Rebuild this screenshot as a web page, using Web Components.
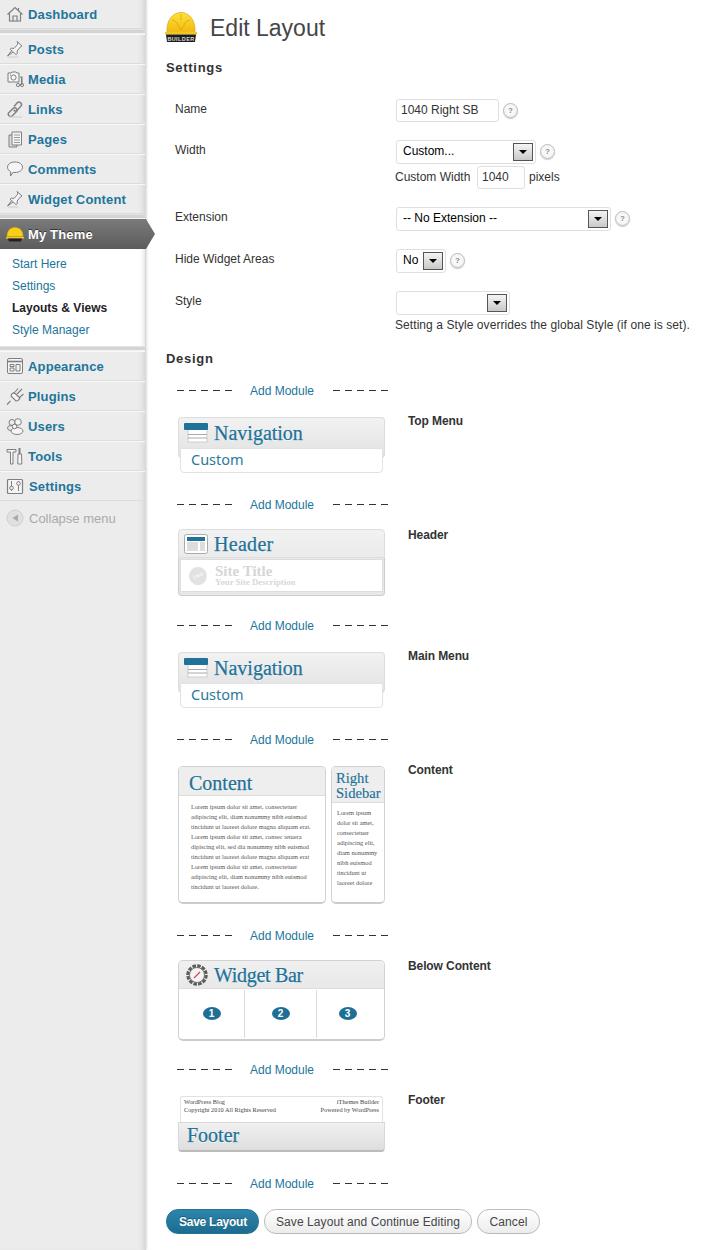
<!DOCTYPE html>
<html lang="en"><head><meta charset="utf-8"><title>Edit Layout</title>
<style>
html,body{margin:0;padding:0;background:#fff;height:1250px;overflow:hidden}
body{font:12px "Liberation Sans",Arial,sans-serif;color:#333}
</style></head><body>
<wp-app>
  <wp-sidebar slot="side">
    <wp-item icon="home" label="Dashboard"></wp-item>
    <wp-sep></wp-sep>
    <wp-item icon="pin" label="Posts"></wp-item>
    <wp-item icon="media" label="Media"></wp-item>
    <wp-item icon="link" label="Links"></wp-item>
    <wp-item icon="pages" label="Pages"></wp-item>
    <wp-item icon="comment" label="Comments"></wp-item>
    <wp-item icon="pin" label="Widget Content"></wp-item>
    <wp-sep></wp-sep>
    <wp-current label="My Theme"></wp-current>
    <wp-sub>
      <wp-sublink>Start Here</wp-sublink>
      <wp-sublink>Settings</wp-sublink>
      <wp-sublink active>Layouts &amp; Views</wp-sublink>
      <wp-sublink>Style Manager</wp-sublink>
    </wp-sub>
    <wp-sep></wp-sep>
    <wp-item icon="appearance" label="Appearance"></wp-item>
    <wp-item icon="plugin" label="Plugins"></wp-item>
    <wp-item icon="users" label="Users"></wp-item>
    <wp-item icon="tools" label="Tools"></wp-item>
    <wp-item icon="settings" label="Settings" gap="5"></wp-item>
    <wp-collapse></wp-collapse>
  </wp-sidebar>
  <wp-main>
    <page-title>Edit Layout</page-title>
    <sec-head style="margin-top:8px">Settings</sec-head>
    <form-row label="Name" style="margin-top:23px;height:41px"><text-box w="103">1040 Right SB</text-box><help-tip></help-tip></form-row>
    <form-row label="Width" style="height:67px">
      <fake-select w="140">Custom...</fake-select><help-tip></help-tip>
      <sub-line><span style="width:78px;padding-bottom:2px">Custom Width</span><text-box w="48" style="margin:0 4px">1040</text-box><span style="padding-bottom:2px">pixels</span></sub-line>
    </form-row>
    <form-row label="Extension" style="height:42px"><fake-select w="215">-- No Extension --</fake-select><help-tip></help-tip></form-row>
    <form-row label="Hide Widget Areas" style="height:42px"><fake-select w="50">No</fake-select><help-tip></help-tip></form-row>
    <form-row label="Style" style="height:59px"><fake-select w="114"></fake-select>
      <sub-line class="note">Setting a Style overrides the global Style (if one is set).</sub-line>
    </form-row>
    <sec-head style="margin-top:0">Design</sec-head>
    <add-module style="margin-top:16px"></add-module>
    <layout-row label="Top Menu" style="margin-top:20px"><nav-mod></nav-mod></layout-row>
    <add-module style="margin-top:24px"></add-module>
    <layout-row label="Header" o="-2" style="margin-top:18px"><header-mod></header-mod></layout-row>
    <add-module style="margin-top:22px"></add-module>
    <layout-row label="Main Menu" style="margin-top:20px"><nav-mod></nav-mod></layout-row>
    <add-module style="margin-top:24px"></add-module>
    <layout-row label="Content" style="margin-top:20px"><content-mod></content-mod></layout-row>
    <add-module style="margin-top:24px"></add-module>
    <layout-row label="Below Content" o="-2" style="margin-top:18px"><widget-mod></widget-mod></layout-row>
    <add-module style="margin-top:21px"></add-module>
    <layout-row label="Footer" style="margin-top:20px"><footer-mod></footer-mod></layout-row>
    <add-module style="margin-top:24px"></add-module>
    <button-row>
      <wp-button primary>Save Layout</wp-button>
      <wp-button>Save Layout and Continue Editing</wp-button>
      <wp-button style="width:63px;justify-content:center">Cancel</wp-button>
    </button-row>
  </wp-main>
</wp-app>
<script>
const SERIF='"Liberation Serif","DejaVu Serif",serif';
const G='#7f7f7f',L='#f5f5f5';
const ICONS={
home:`<path d="M1.5 9.5 9 2.5l7.5 7M3.5 8.5V16h11V8.5M7 16v-5h4v5M12.5 3v2.5" fill="none" stroke="${G}" stroke-width="1.2"/><path d="M3.5 16.5h11" stroke="#aaa"/>`,
pin:`<path d="M11 1.5l5 4.5-1.5.8-3.4 4.2.2 2.6-1.2 1-6-5.4 1.2-1 2.7.2 3.6-4 .1-1.5z" fill="${L}" stroke="${G}"/><path d="M5.8 10.5 1.5 16l5.6-4" fill="#ddd" stroke="${G}"/><path d="M2 17h10" stroke="#ccc"/>`,
media:`<path d="M2 3h3l1-1h4l1 1h2v9H2z" fill="${L}" stroke="${G}"/><circle cx="7.5" cy="7.5" r="2.6" fill="none" stroke="${G}"/><path d="M14 7h1.5v8M16 6.5v8" fill="none" stroke="${G}"/><circle cx="12" cy="15" r="1.6" fill="none" stroke="${G}"/><circle cx="16" cy="15" r="1.6" fill="none" stroke="${G}"/><path d="M4 5h1" stroke="${G}"/>`,
link:`<path d="M3 12.5 7 8.5a2.3 2.3 0 0 1 3.3 3.3l-4 4a2.3 2.3 0 0 1-3.3-3.3z" fill="none" stroke="${G}" stroke-width="1.4"/><path d="M8 6.500 11 3a2.500 2.500 0 0 1 3.800 3.400L11 10.500a2.500 2.500 0 0 1-3.400-.5" fill="none" stroke="${G}" stroke-width="1.4"/><path d="M3 17h13" stroke="#ccc"/>`,
pages:`<path d="M3 5h8v12H3z" fill="#ddd" stroke="${G}"/><path d="M6 2h9.500v13H6z" fill="${L}" stroke="${G}"/><path d="M8 5h6M8 7.500h6M8 10h6M8 12.500h6" stroke="#999"/>`,
comment:`<path d="M9 2c4.400 0 7.500 2.200 7.500 5.200S13.400 12.500 9 12.500c-.8 0-1.400 0-2-.2L4.500 16l.2-4.300C2.800 10.800 1.500 9.200 1.500 7.200 1.500 4.200 4.600 2 9 2z" fill="${L}" stroke="${G}"/>`,
appearance:`<rect x="1.500" y="1.500" width="15" height="15" rx="1.500" fill="${L}" stroke="${G}"/><path d="M2 4.500h14" stroke="${G}" stroke-width="1.600"/><path d="M4 7.500h4v2H4zM4 11h4v3H4zM10 7.500h4V14h-4z" fill="none" stroke="${G}"/>`,
plugin:`<path d="M1 17.500 4.500 14M5 9l5 5c2 0 3-1 4-3L8 5.500C6 6.500 5 7.500 5 9z" fill="${L}" stroke="${G}" stroke-width="1.100"/><path d="M9 5l3-3.500M14 10l3.500-3M11 7l5-5" stroke="${G}" stroke-width="1.100" fill="none"/>`,
users:`<circle cx="6" cy="5.500" r="3" fill="none" stroke="${G}"/><circle cx="12" cy="5" r="3.300" fill="${L}" stroke="${G}"/><ellipse cx="5" cy="11" rx="3.500" ry="2.500" fill="none" stroke="${G}"/><ellipse cx="11" cy="14" rx="6" ry="3.500" fill="${L}" stroke="${G}"/><circle cx="8.500" cy="9.500" r="2.300" fill="${L}" stroke="${G}"/>`,
tools:`<path d="M1 2.500h9V5H7v12H4.500V5H1z" fill="${L}" stroke="${G}"/><path d="M13.500 1v6" stroke="${G}" stroke-width="2"/><path d="M12 7h3.500l.3 10h-4z" fill="${L}" stroke="${G}"/>`,
settings:`<rect x="1.500" y="2.500" width="15" height="14" rx="1" fill="${L}" stroke="${G}" stroke-width="1.200"/><path d="M5.500 4v10M12.500 4v10" stroke="${G}"/><circle cx="5.500" cy="11" r="1.800" fill="${L}" stroke="${G}"/><circle cx="12.500" cy="6.500" r="1.800" fill="${L}" stroke="${G}"/>`
};
function def(name,css,html,init){
  customElements.define(name,class extends HTMLElement{
    constructor(){super();const r=this.attachShadow({mode:'open'});r.innerHTML=`<style>${css}</style>`+(typeof html==='function'?'':html);}
    connectedCallback(){
      if(typeof html==='function'){const st=this.shadowRoot.querySelector('style').outerHTML;this.shadowRoot.innerHTML=st+html(this);}
      if(init)init(this);
    }
  });
}
const ATTR=(e,n,d='')=>e.getAttribute(n)??d;

def('wp-app',`:host{display:grid;grid-template-columns:146px 1fr;height:1250px;overflow:hidden}`,
`<slot name="side"></slot><slot></slot>`);

def('wp-sidebar',`:host{display:block;height:1250px;background:#ececec;box-sizing:border-box;width:146px;box-shadow:inset -7px 0 6px -5px #cfcfcf,1px 0 2px #ddd;position:relative;padding-top:0}`,`<slot></slot>`);

def('wp-item',`:host{display:flex;align-items:center;height:30px;box-sizing:border-box;border-top:1px solid #f8f8f8;border-bottom:1px solid #dcdcdc;padding-left:6px;width:145px;
  font:bold 13px "Liberation Sans",Arial,sans-serif;letter-spacing:.15px;color:#21759b;white-space:nowrap}
svg{width:18px;height:18px;flex:none}
:host(:first-child){height:29px;border-top:0}`,
e=>`<svg viewBox="0 0 18 18" aria-hidden="true" style="margin-right:${ATTR(e,'gap','4')}px">${ICONS[ATTR(e,'icon')]||''}</svg><span>${ATTR(e,'label')}</span>`);

def('wp-sep',`:host{display:block;height:5px;width:145px;box-sizing:border-box;background:#d4d4d4;border-bottom:1px solid #f2f2f2;border-top:1px solid #e2e2e2;margin-bottom:0}`,``);

def('wp-current',`:host{display:flex;align-items:center;height:30px;width:155px;position:relative;z-index:2;color:#fff;
 font:bold 13px "Liberation Sans",Arial,sans-serif;letter-spacing:.15px;text-shadow:0 -1px 0 #333;padding-left:6px;box-sizing:border-box;
 background:linear-gradient(#7a7a7a,#5c5c5c);clip-path:polygon(0 0,146px 0,155px 50%,146px 100%,0 100%)}
svg{width:18px;height:16px;margin-right:4px;flex:none}`,
e=>`<svg viewBox="0 0 18 16" aria-hidden="true"><path d="M1 10.500C1 4.500 4.500 1.500 9 1.500s8 3 8 9z" fill="#f6cf16" stroke="#d8a90d" stroke-width=".6"/><path d="M0 11h18v1.600H0z" fill="#f3cc22"/><path d="M2 12.500h14l-1 3H3z" fill="#222"/></svg><span>${ATTR(e,'label')}</span>`);

def('wp-sub',`:host{display:block;background:#fff;width:145px;padding:4px 0 0;box-sizing:border-box;height:97px;box-shadow:inset -6px 0 5px -5px #ddd}`,`<slot></slot>`);
def('wp-sublink',`:host{display:block;height:22px;line-height:22px;padding-left:12px;font-size:12px;color:#21759b;white-space:nowrap}
:host([active]){color:#222;font-weight:bold}`,`<slot></slot>`);
def('wp-collapse',`:host{display:flex;align-items:center;height:34px;padding-left:6px;color:#aaa;font-size:13px;width:145px;box-sizing:border-box}
svg{width:18px;height:18px;margin-right:5px}`,
`<svg viewBox="0 0 18 18" aria-hidden="true"><circle cx="9" cy="9" r="8" fill="#e0e0e0" stroke="#d0d0d0"/><path d="M12 5.500v7L6.500 9z" fill="#aaa"/></svg><span>Collapse menu</span>`);

def('wp-main',`:host{display:block;padding-left:20px;min-width:0;color:#333}`,`<slot></slot>`);

def('page-title',`:host{display:flex;align-items:center;height:47px;padding-top:5px;box-sizing:content-box;margin-bottom:-1px;font:23px "Liberation Sans",Arial,sans-serif;color:#464646;line-height:1}
svg{width:32px;height:32px;margin:-3px 13px 0 -1px;flex:none}`,
`<svg viewBox="0 0 32 32" aria-hidden="true">
<defs><linearGradient id="h" x1="0" y1="0" x2="0" y2="1"><stop offset="0" stop-color="#ffe23a"/><stop offset="1" stop-color="#f0b810"/></linearGradient></defs>
<path d="M2 22C1 9 8 1.500 16 1.500S31 9 30 22z" fill="url(#h)" stroke="#d9a20e" stroke-width=".7"/>
<path d="M7 9c3 1 5 2 6 5l3 5 3-5c1-3 3-4 6-5M16 3v6" fill="none" stroke="#d9a20e" stroke-width=".8"/>
<path d="M0 21h32v2.500H0z" fill="#f4c51c"/>
<path d="M1 23.500h30l-1 7.500H2z" fill="#1d1d1d"/>
<text x="16" y="29.700" text-anchor="middle" font-family="Liberation Sans" font-weight="bold" font-size="5.500" fill="#ddd" letter-spacing=".4">BUILDER</text></svg><slot></slot>`);

def('sec-head',`:host{display:block;font:bold 13px/17px "Liberation Sans",Arial,sans-serif;color:#333;letter-spacing:.7px}`,`<slot></slot>`);

def('form-row',`:host{display:grid;grid-template-columns:221px 1fr;padding-left:9px;box-sizing:border-box;font-size:12px;color:#333}
.l{padding-top:3px;white-space:nowrap}.c{display:flex;flex-wrap:wrap;align-items:flex-start;align-content:flex-start}`,
e=>`<div class="l">${ATTR(e,'label')}</div><div class="c"><slot></slot></div>`);

const boxCss=`display:inline-flex;align-items:center;box-sizing:border-box;border:1px solid #dfdfdf;border-radius:3px;background:#fff;font:12px "Liberation Sans",Arial,sans-serif;color:#000;white-space:nowrap;`;
def('text-box',`:host{${boxCss}height:23px;padding:0 0 2px 4px;color:#333}`,`<slot></slot>`,
e=>{e.style.width=ATTR(e,'w')+'px'});
def('fake-select',`:host{${boxCss}height:24px;padding:0 2px 0 6px;justify-content:space-between}
s{text-decoration:none;padding-bottom:2px}
i{display:flex;align-items:center;justify-content:center;width:20px;height:18px;box-sizing:border-box;border:1px solid #555;background:linear-gradient(#f4f4f4,#c9c9c9);margin-left:auto}
i:after{content:"";border:4px solid transparent;border-top:4px solid #000;border-bottom:0}`,
`<s><slot></slot></s><i></i>`,e=>{e.style.width=ATTR(e,'w')+'px'});
def('help-tip',`:host{display:inline-flex;margin:4px 0 0 4px;width:15px;height:15px;border-radius:50%;box-sizing:border-box;border:1px solid #bbb;background:radial-gradient(#fff,#eee);box-shadow:0 1px 1px #ccc;
 align-items:center;justify-content:center;font:bold 8px/1 "Liberation Sans",Arial,sans-serif;color:#888}`,`?`);
def('sub-line',`:host{display:flex;flex-basis:100%;align-items:center;margin-top:2px;margin-left:-1px;font-size:12px;color:#333;white-space:nowrap;height:23px}
:host(.note){margin-top:0;height:20px;letter-spacing:.07px}`,`<slot></slot>`);

def('add-module',`:host{display:grid;grid-template-columns:56px 1fr 56px;align-items:center;width:212px;height:15px;margin-left:11px;font-size:12px;color:#21759b;text-align:center}
i{height:1px;background:repeating-linear-gradient(90deg,#333 0 7px,transparent 7px 12px)}
span{padding-right:2px}`,
`<i></i><span>Add Module</span><i></i>`);

def('layout-row',`:host{display:grid;grid-template-columns:207px 1fr;margin-left:12px;column-gap:23px}
b{font:bold 12px/14px "Liberation Sans",Arial,sans-serif;letter-spacing:-.1px;color:#333}`,
e=>`<div><slot></slot></div><b style="margin-top:${ATTR(e,'o','-4')}px">${ATTR(e,'label')}</b>`);

const modCss=`:host{display:block;box-sizing:border-box;font-family:${SERIF};color:#1f7298}
*{box-sizing:border-box}
.t{font-size:20px;line-height:1;white-space:nowrap;-webkit-text-stroke:.25px #1f7298;text-shadow:0 1px 0 #fff}
.hd{display:flex;align-items:center;border:1px solid #ddd;border-radius:4px 4px 0 0;background:linear-gradient(#f2f2f2,#e2e2e2);}
`;
def('nav-mod',modCss+`
:host{height:56px;margin-top:-1px}
.hd{height:41px;padding:0 0 10px 5px;border-bottom:1px solid #ccc;border-radius:4px}
svg{width:24px;height:20px;margin:0 6px 0 0;flex:none}
.b{margin:-10px 2px 0 2px;height:25px;background:#fff;border:1px solid #e2e2e2;border-radius:0 0 4px 4px;padding-left:10px;position:relative;
 font:14.500px/21px "Noto Sans","Liberation Sans",sans-serif;color:#2a7a9e}`,
`<div class="hd"><svg viewBox="0 0 24 20" aria-hidden="true"><rect x="4" y="2" width="19" height="17" fill="#fff" stroke="#ccc"/><path d="M4 11.500h19M4 15h19" stroke="#aaa"/><rect x="0" y="0" width="24" height="7" rx="1" fill="#1f7298"/></svg><span class="t">Navigation</span></div><div class="b">Custom</div>`);
def('header-mod',modCss+`
:host{height:67px;margin-top:-1px}
.hd{height:29px;padding-left:5px;border-bottom:1px solid #ddd;background:linear-gradient(#f2f2f2,#ebebeb)}
.t{letter-spacing:.3px}
svg{width:24px;height:20px;margin-right:6px;flex:none}
.o{height:38px;border:1px solid #ccc;border-top:0;border-radius:0 0 4px 4px;background:#e8e8e8;padding:1px 1px 3px}
.b{height:100%;background:#fff;border:1px solid #ddd;display:flex;align-items:center;padding-left:8px;color:#d0d0d0}
.c{width:18px;height:18px;border-radius:50%;background:#e2e2e2;margin-right:8px;flex:none;display:flex;align-items:center;justify-content:center;color:#fff;font:bold 3.500px "Liberation Sans",sans-serif;transform:rotate(-20deg)}
.s{font-size:15px;line-height:14px;font-weight:bold;color:#d6d6d6}
.d{font-size:8.800px;line-height:9px;font-weight:bold;color:#d8d8d8}`,
`<div class="hd"><svg viewBox="0 0 24 20" aria-hidden="true"><rect x=".5" y=".5" width="23" height="19" rx="2" fill="#fff" stroke="#aaa"/><rect x="3" y="3" width="18" height="4" fill="#1f7298"/><rect x="3" y="8" width="11" height="9" fill="#ddd"/><rect x="16" y="8" width="5" height="9" fill="#ddd"/></svg><span class="t">Header</span></div>
<div class="o"><div class="b"><span class="c">LOGO</span><span><div class="s">Site Title</div><div class="d">Your Site Description</div></span></div></div>`);
def('content-mod',modCss+`
:host{display:grid;grid-template-columns:148px 54px;column-gap:5px;height:138px;margin-top:-1px}
.p{border:1px solid #d2d2d2;border-bottom:2px solid #ccc;border-radius:5px;overflow:hidden;background:#fff}
.h{background:#eee;border-bottom:1px solid #ddd;}
.l{font:6.400px/10px ${SERIF};color:#555;white-space:nowrap;padding:1px 0 0 12px}
.t2{font-size:14.600px;line-height:15px;padding:4px 0 1px 4px;white-space:nowrap;height:36px;-webkit-text-stroke:.15px #1f7298}
.r .l{padding:5px 0 0 5px}`,
`<div class="p"><div class="h" style="height:29px;padding:6px 0 0 10px"><span class="t">Content</span></div><div class="l" style="padding-top:6px">Lorem ipsum dolor sit amet, consectetuer<br>adipiscing elit,  diam nonummy nibh euismod<br>tincidunt ut laoreet dolore magna aliquam erat.<br>Lorem ipsum dolor sit amet, consec tetuera<br>dipiscing elit, sed dia  nonummy nibh euismod<br>tincidunt ut laoreet dolore magna aliquam erat<br>Lorem ipsum dolor sit amet, consectetuer<br>adipiscing elit,  diam nonummy nibh euismod<br>tincidunt ut laoreet dolore.</div></div>
<div class="p r"><div class="h t2">Right<br>Sidebar</div><div class="l">Lorem ipsum<br>dolor sit amet,<br>consectetuer<br>adipiscing elit,<br>diam nonummy<br>nibh euismod<br>tincidunt ut<br>laoreet dolore</div></div>`);
def('widget-mod',modCss+`
:host{height:81px;margin-top:-1px;border:1px solid #d2d2d2;border-bottom:2px solid #ccc;border-radius:5px;overflow:hidden;background:#fff}
.hd{height:28px;border:0;border-bottom:1px solid #ddd;border-radius:0;padding-left:7px;background:linear-gradient(#f0f0f0,#e8e8e8)}
.t{letter-spacing:-.3px}
svg{width:22px;height:22px;margin-right:6px;flex:none}
.g{display:grid;grid-template-columns:66px 72px 1fr;height:48px;margin-top:1px}
.g div{display:flex;align-items:center;justify-content:center;border-right:1px solid #ddd}
.g div:last-child{border:0;padding-right:6px}
.g span{display:flex;align-items:center;justify-content:center;width:18px;height:13px;border-radius:50%;background:#1f6f94;color:#fff;font:bold 10px "Liberation Sans",sans-serif;margin-bottom:2px}`,
`<div class="hd"><svg viewBox="0 0 22 22" aria-hidden="true"><circle cx="11" cy="11" r="9" fill="none" stroke="#5d5d5d" stroke-width="3.500" stroke-dasharray="3.500 1.200"/><circle cx="11" cy="11" r="7.500" fill="#f4f4f4" stroke="#777"/><path d="M8 14l6-6" stroke="#c44" stroke-width="1.100"/></svg><span class="t">Widget Bar</span></div>
<div class="g"><div><span>1</span></div><div><span>2</span></div><div><span>3</span></div></div>`);
def('footer-mod',modCss+`
:host{height:56px;margin-top:-1px}
.b{margin:0 2px;height:26px;background:#fff;border:1px solid #e2e2e2;border-bottom:0;border-radius:3px 3px 0 0;padding:1px 3px;display:flex;justify-content:space-between;font:6.300px/8px ${SERIF};color:#444;white-space:nowrap}
.b div:last-child{text-align:right}
.hd{height:30px;padding:0 0 4px 8px;border:1px solid #d8d8d8;border-bottom:2px solid #bbb;border-radius:0 0 4px 4px;background:linear-gradient(#f0f0f0,#dedede)}`,
`<div class="b"><div>WordPress Blog<br>Copyright 2010 All Rights Reserved</div><div>iThemes Builder<br>Powered by WordPress</div></div><div class="hd"><span class="t">Footer</span></div>`);

def('button-row',`:host{display:flex;gap:5px;margin-top:18px}`,`<slot></slot>`);
def('wp-button',`:host{display:inline-flex;align-items:center;height:25px;box-sizing:border-box;padding:0 11px;border:1px solid #bbb;border-radius:12px;background:linear-gradient(#fff,#ececec);font:12px "Liberation Sans",Arial,sans-serif;color:#464646;letter-spacing:.08px;white-space:nowrap}
:host([primary]){padding:0 12px;width:93px;border:1px solid #21759b;background:linear-gradient(#2b86ad,#1e6b8e);color:#fff;font-weight:bold;letter-spacing:-.25px;text-shadow:0 -1px 0 rgba(0,0,0,.3)}`,`<slot></slot>`);
</script>
</body></html>
